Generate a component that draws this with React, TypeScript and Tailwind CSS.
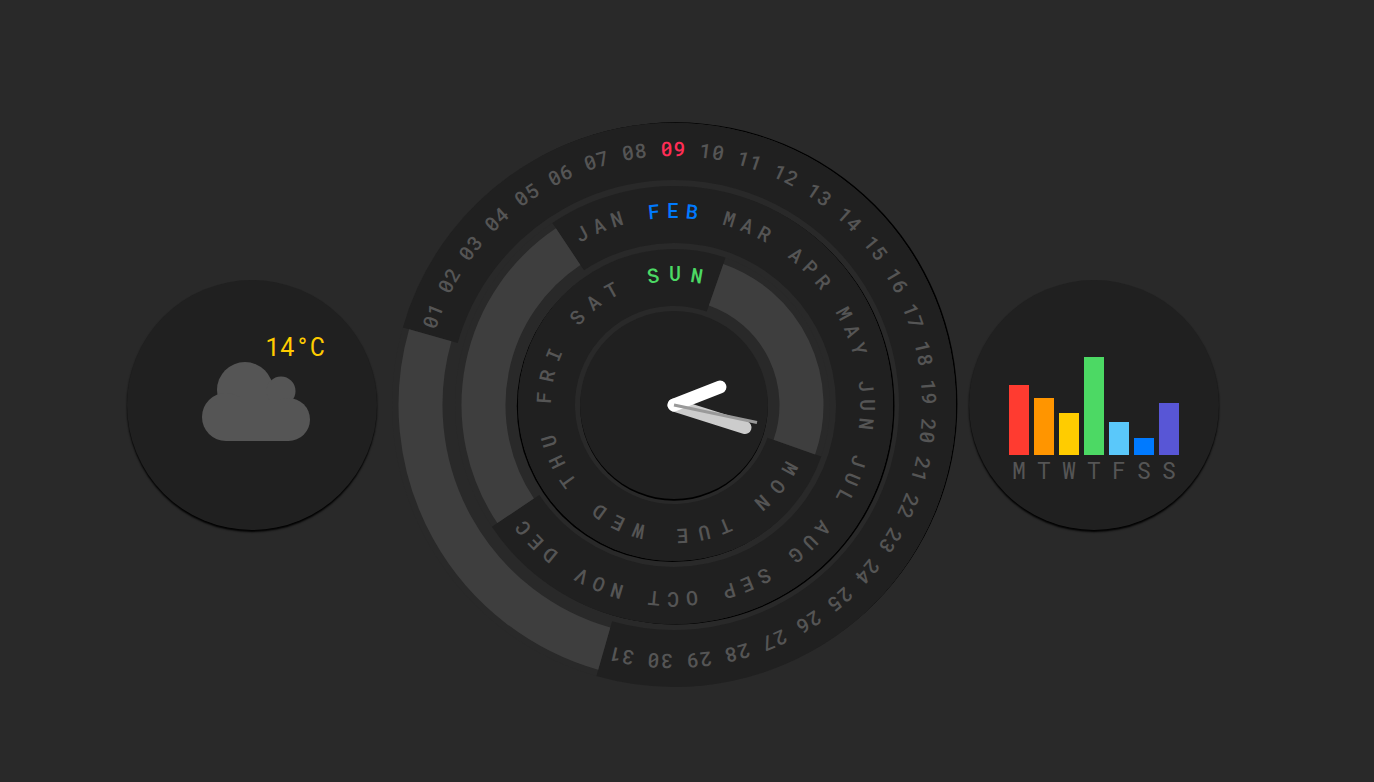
import { clsx } from 'clsx';

const CX = 284;
const CY = 283;

interface Ring {
  labels: string[];
  active: number;
  radius: number; // outer edge of the disc
  textRadius: number;
  textX: number;
  shadowAngle: number;
  activeClass: string;
}

const rings: Ring[] = [
  {
    labels: Array.from({ length: 31 }, (_, i) => String(i + 1).padStart(2, '0')),
    active: 8,
    radius: 282,
    textRadius: 256,
    textX: 283,
    shadowAngle: 60,
    activeClass: 'fill-[#ff2d55]',
  },
  {
    labels: ['JAN', 'FEB', 'MAR', 'APR', 'MAY', 'JUN', 'JUL', 'AUG', 'SEP', 'OCT', 'NOV', 'DEC'],
    active: 1,
    radius: 219,
    textRadius: 194,
    textX: 283,
    shadowAngle: 115,
    activeClass: 'fill-[#007aff]',
  },
  {
    labels: ['MON', 'TUE', 'WED', 'THU', 'FRI', 'SAT', 'SUN'],
    active: 6,
    radius: 156,
    textRadius: 131,
    textX: 285,
    shadowAngle: 230,
    activeClass: 'fill-[#4cd964]',
  },
];

const week = [
  { day: 'M', value: 70, color: 'bg-[#ff3b30]' },
  { day: 'T', value: 57, color: 'bg-[#ff9500]' },
  { day: 'W', value: 42, color: 'bg-[#ffcc00]' },
  { day: 'T', value: 98, color: 'bg-[#4cd964]' },
  { day: 'F', value: 33, color: 'bg-[#5ac8fa]' },
  { day: 'S', value: 17, color: 'bg-[#007aff]' },
  { day: 'S', value: 52, color: 'bg-[#5856d6]' },
];

// angle in degrees, clockwise from 12 o'clock
const polar = (radius: number, angle: number) => {
  const rad = (angle * Math.PI) / 180;
  return [CX + radius * Math.sin(rad), CY - radius * Math.cos(rad)];
};

const arc = (radius: number, from: number, to: number) => {
  const [x1, y1] = polar(radius, from);
  const [x2, y2] = polar(radius, to);
  return `M${x1} ${y1}A${radius} ${radius} 0 ${to - from > 180 ? 1 : 0} 1 ${x2} ${y2}`;
};

function Disc({ radius, shadowAngle, className }: { radius: number; shadowAngle: number; className: string }) {
  const [x, y] = polar(2, shadowAngle);
  return (
    <>
      <circle cx={x} cy={y} r={radius - 0.3} className="fill-black" filter="url(#soft)" />
      <circle cx={CX} cy={CY} r={radius} className={className} />
    </>
  );
}

function DialRing({ labels, active, radius, textRadius, textX, shadowAngle, activeClass }: Ring) {
  // labels share three quarters of the circle
  const step = 270 / labels.length;
  const start = -(active + 0.5) * step;
  const middle = radius - 28.5;

  return (
    <g>
      <Disc radius={radius} shadowAngle={shadowAngle} className="fill-[#292929]" />
      <path d={arc(middle, start, start + 270)} fill="none" strokeWidth={57} className="stroke-[#202020]" />
      <path d={arc(middle, start + 270, start + 360)} fill="none" strokeWidth={44} className="stroke-[#3e3e3e]" />
      {labels.map((label, i) => (
        <g key={label} className={i === active ? activeClass : 'fill-[#555555]'}>
          {label.split('').map((char, j) => {
            const angle = (i - active + (j - (label.length - 1) / 2) / (label.length + 1)) * step;
            return (
              <text
                key={j}
                x={textX}
                y={CY - textRadius + 7}
                textAnchor="middle"
                transform={`rotate(${angle} ${textX} ${CY})`}
              >
                {char}
              </text>
            );
          })}
        </g>
      ))}
    </g>
  );
}

function Dial() {
  return (
    <svg
      viewBox="0 0 566 566"
      className="w-full max-w-[566px] min-w-0 overflow-visible text-[20px] font-medium"
      role="img"
      aria-label="Sunday, February 09"
    >
      <defs>
        <filter id="soft" x="-5%" y="-5%" width="110%" height="110%">
          <feGaussianBlur stdDeviation="0.7" />
        </filter>
      </defs>
      {rings.map((ring) => (
        <DialRing key={ring.radius} {...ring} />
      ))}
      <Disc radius={94} shadowAngle={180} className="fill-[#202020]" />

      {/* Hands */}
      <g strokeLinecap="round">
        <line x1="284" y1="283" x2="355" y2="305.5" strokeWidth="13" className="stroke-[#cccccc]" />
        <line x1="284" y1="283" x2="330" y2="265" strokeWidth="13" className="stroke-white" />
      </g>
      <line x1="284" y1="283" x2="367" y2="300.5" strokeWidth="3" className="stroke-[#999999]" />
    </svg>
  );
}

function Weather() {
  return (
    <section className="size-[250px] shrink-0 rounded-full bg-[#202020] pt-[52px] pl-[75px] shadow-[0_2px_2px_#000]">
      <div className="w-fit">
        <p className="pl-[63px] text-[25px] leading-[30px] text-[#ffcc00]">14°C</p>
        <svg viewBox="0 0 108 79" className="h-[79px] w-[108px] fill-[#555555]" aria-hidden="true">
          <circle cx="43" cy="28" r="28" />
          <circle cx="79" cy="29" r="14.5" />
          <circle cx="24" cy="55" r="24" />
          <circle cx="86.5" cy="57.5" r="21.5" />
          <rect x="24" y="38" width="62" height="41" />
        </svg>
      </div>
    </section>
  );
}

function WeekChart() {
  return (
    <section className="flex size-[250px] shrink-0 justify-center gap-[5px] rounded-full bg-[#202020] pt-[77px] shadow-[0_2px_2px_#000]">
      {week.map(({ day, value, color }, i) => (
        <div key={i} className="w-5">
          <div className="flex h-[98px] items-end">
            <div className={clsx('w-full', color)} style={{ height: value }} />
          </div>
          <p className="text-center text-[23px] leading-[30px] text-[#555555]">{day}</p>
        </div>
      ))}
    </section>
  );
}

export default function App() {
  return (
    <main className="flex min-h-screen flex-col items-center justify-center gap-[13px] bg-[#292929] pt-7 pr-7 font-['Roboto_Mono','Roboto',sans-serif] lg:flex-row">
      <Weather />
      <Dial />
      <WeekChart />
    </main>
  );
}
